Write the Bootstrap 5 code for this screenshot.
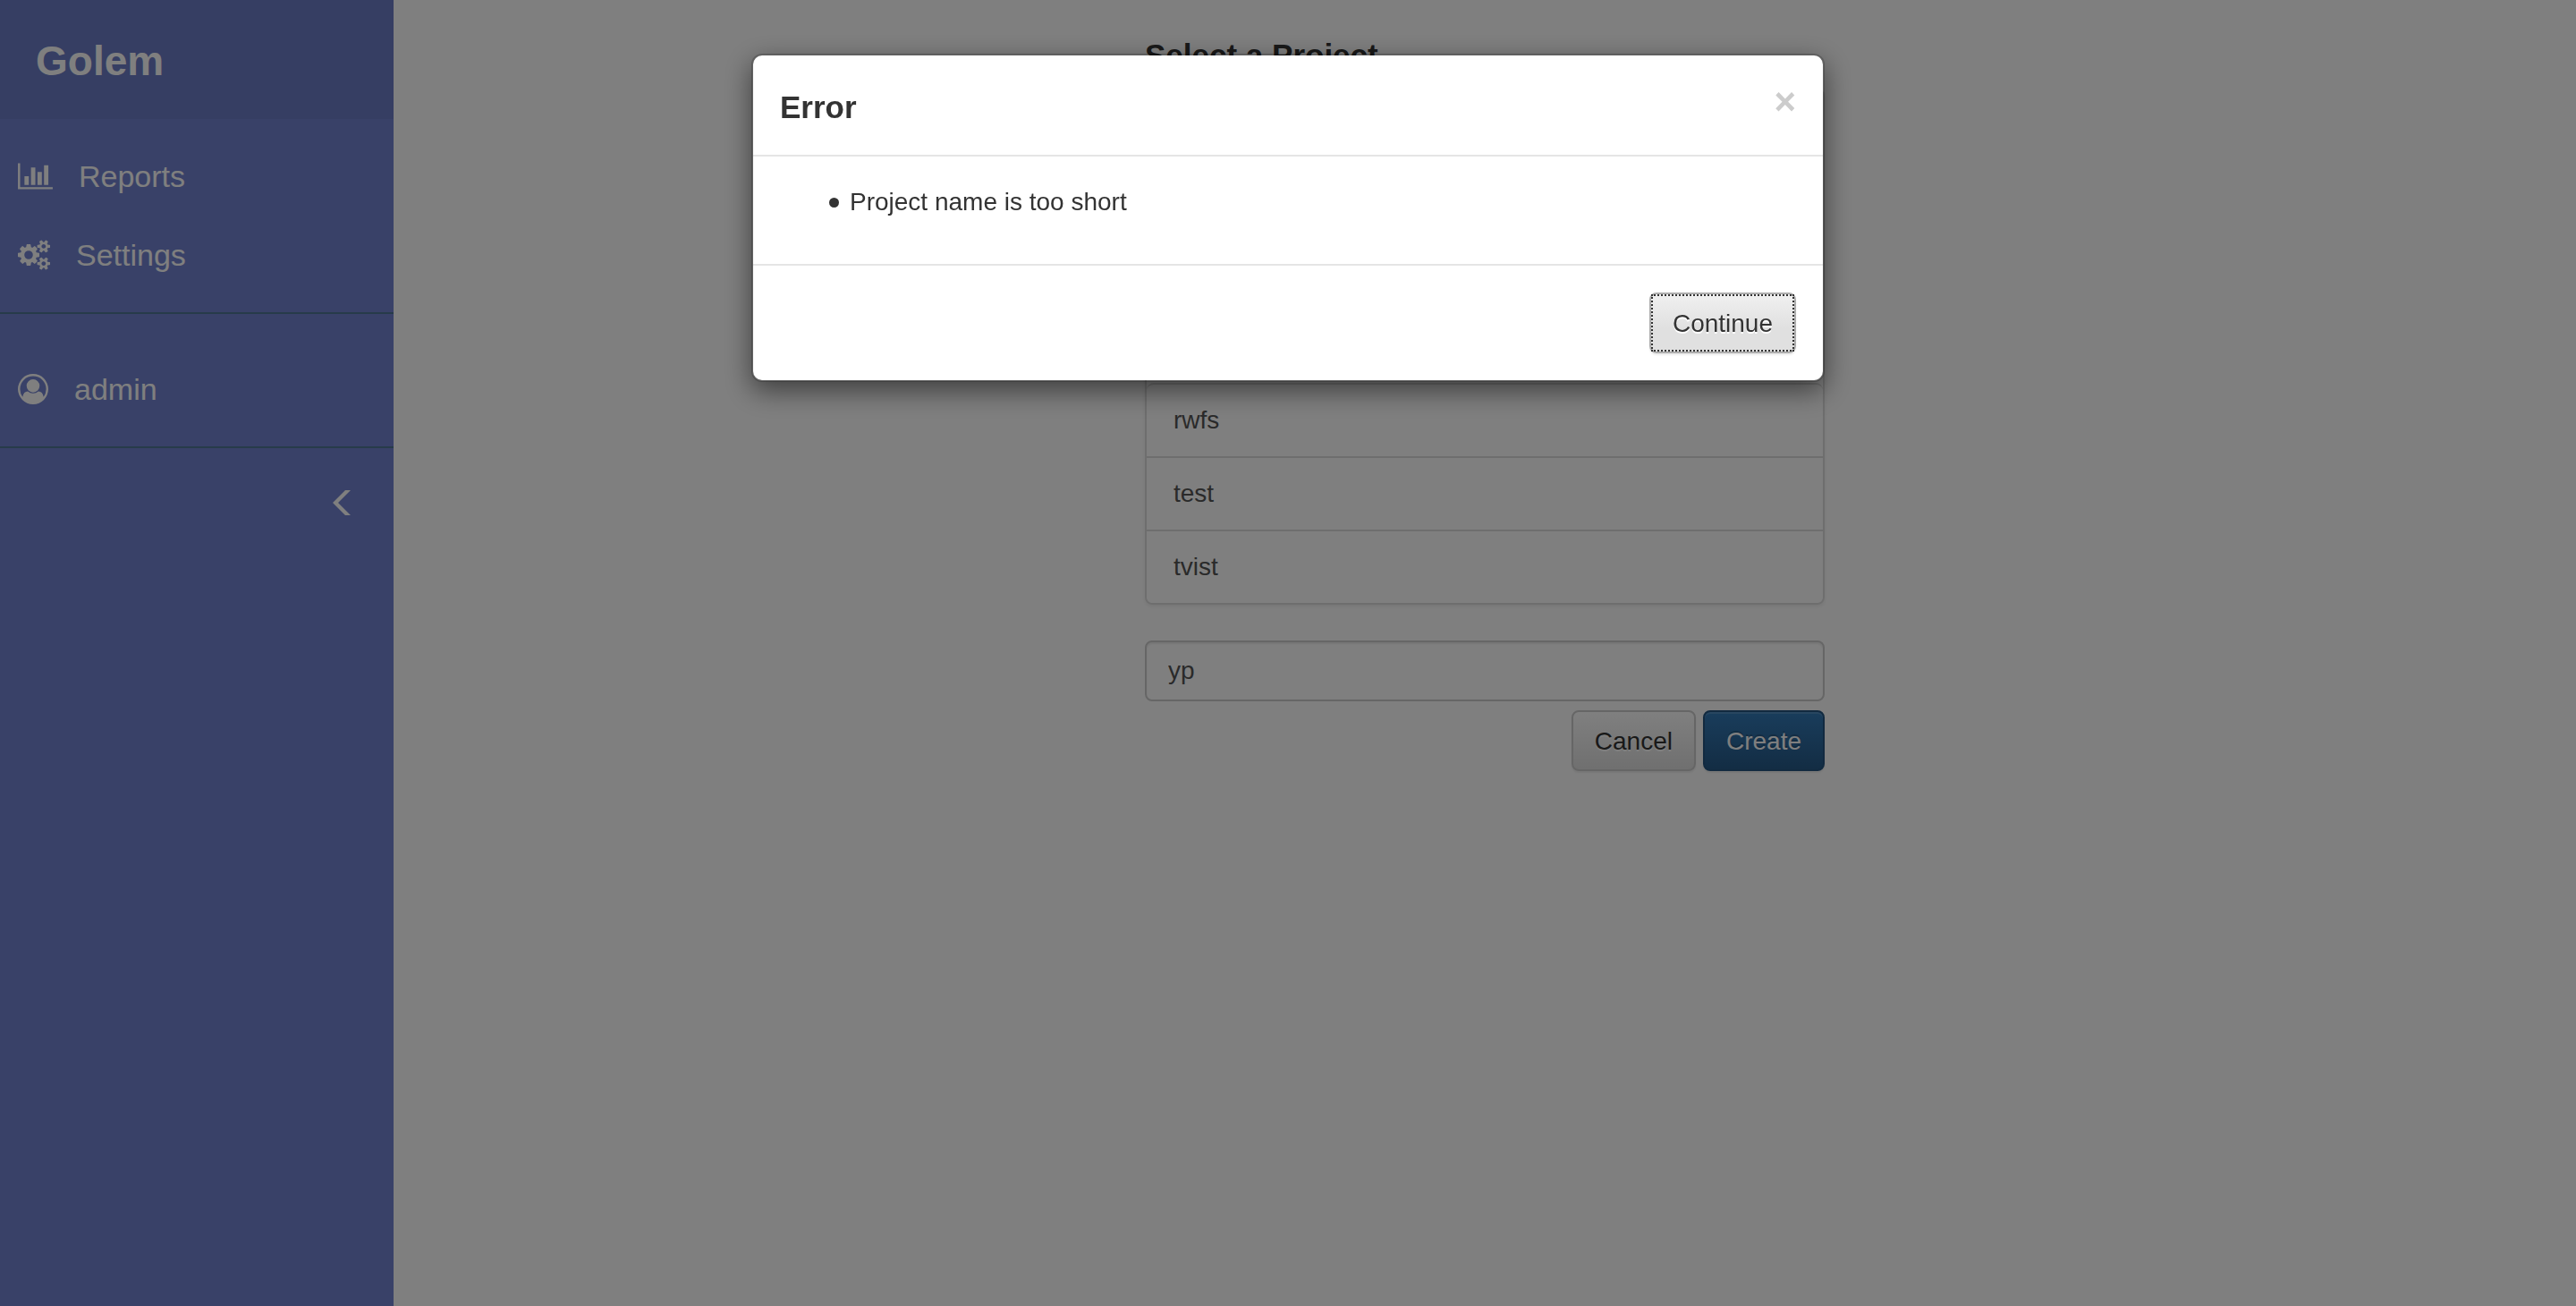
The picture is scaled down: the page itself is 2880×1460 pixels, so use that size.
<!DOCTYPE html>
<html lang="en">
<head>
<meta charset="utf-8">
<meta name="viewport" content="width=device-width, initial-scale=1">
<title>Golem</title>
<link href="https://cdn.jsdelivr.net/npm/bootstrap@5.3.0/dist/css/bootstrap.min.css" rel="stylesheet">
<style>
  body { font-family: "Liberation Sans", Arial, sans-serif; font-size: 28px; line-height: 40px; color: #333; background: #fff; }

  /* Sidebar */
  .side-panel { width: 440px; background: #7283d0; }
  .side-brand { padding: 38px 40px 35px; font-size: 46px; line-height: 60px; font-weight: 700; background: #6c7dc6; }
  .side-group { padding: 20px 0; border-bottom: 2px solid #4e7694; }
  .side-user { padding-top: 40px; }
  .side-group .nav-link { gap: 29px; padding: 20px; font-size: 34px; line-height: 48px; color: #fff; }
  .side-group svg { height: 34px; fill: #fff; }
  .side-toggle { padding: 47px 48px; line-height: 0; }
  .side-toggle svg { fill: #fff; }

  /* Project picker */
  .picker { max-width: 760px; }
  .picker-title { margin: 36px 0 12px; font-size: 35px; line-height: 51px; font-weight: 700; }
  .project-list { padding-top: 327px; border: 2px solid #ddd; border-radius: 8px; box-shadow: 0 2px 4px rgba(0,0,0,.075); }
  .project-list .list-group-item { padding: 20px 30px; border: 0; border-top: 2px solid #ddd; color: #555; }
  .project-name { height: 68px; margin: 40px 0 10px; padding: 12px 24px; font-size: 28px; line-height: 40px; color: #555; border: 2px solid #ccc; border-radius: 8px; box-shadow: inset 0 2px 2px rgba(0,0,0,.075); }

  /* Buttons */
  .btn { padding: 13px 24px 11px; font-size: 28px; line-height: 40px; border-width: 2px; border-radius: 8px; }
  .btn-plain { color: #333; border-color: #ccc; background: linear-gradient(#fff, #e0e0e0); text-shadow: 0 2px 0 #fff; box-shadow: inset 0 2px 0 rgba(255,255,255,.15), 0 2px 2px rgba(0,0,0,.075); }
  .btn-create { color: #fff; border-color: #245580; background: linear-gradient(#337ab7, #265a88); text-shadow: 0 -2px 0 rgba(0,0,0,.2); box-shadow: inset 0 2px 0 rgba(255,255,255,.15), 0 2px 2px rgba(0,0,0,.075); }
  .btn-current { position: relative; border-color: #adadad; background: linear-gradient(#f0f0f0, #e0e0e0 60%); }
  .btn-current::after { content: ""; position: absolute; inset: 0; border: 2px dotted #333; }

  /* Dialog */
  .modal-dialog { max-width: 1200px; margin: 60px auto; }
  .modal-content { border: 2px solid rgba(0,0,0,.2); border-radius: 12px; box-shadow: 0 10px 30px rgba(0,0,0,.5); background-clip: padding-box; color: #333; }
  .modal-header { padding: 32px 30px 28px; border-bottom: 2px solid #e5e5e5; }
  .modal-title { font-size: 35px; line-height: 51px; font-weight: 700; }
  .modal-body { padding: 31px 30px 29px; }
  .error-list { margin: 0 0 20px; padding-left: 55px; }
  .error-list li { display: flex; align-items: center; gap: 12px; }
  .error-list li::before { content: ""; width: 11px; height: 11px; border-radius: 50%; background: #333; }
  .modal-footer { padding: 30px; border-top: 2px solid #e5e5e5; }
  .modal-footer .btn { margin: 0; }
  .close-x { padding: 0; border: 0; background: none; font-size: 42px; line-height: 40px; font-weight: 700; color: #ccc; }
</style>
</head>
<body>
<div class="d-flex min-vh-100">
  <aside class="side-panel flex-shrink-0">
    <div class="side-brand"><a href="#" class="text-white text-decoration-none">Golem</a></div>
    <nav class="side-group nav flex-column">
      <a class="nav-link d-flex align-items-center" href="#">
        <svg width="39" viewBox="0 0 2048 1792" aria-hidden="true"><path d="M640 896v512h-256v-512h256zm384-512v1024h-256v-1024h256zm1024 1152v128h-2048v-1536h128v1408h1920zm-640-896v768h-256v-768h256zm384-384v1152h-256v-1152h256z"/></svg>
        Reports
      </a>
      <a class="nav-link d-flex align-items-center" href="#">
        <svg width="36" viewBox="0 0 1920 1792" aria-hidden="true"><path d="M896 896q0-106-75-181t-181-75-181 75-75 181 75 181 181 75 181-75 75-181zm768 512q0-52-38-90t-90-38-90 38-38 90q0 53 37.5 90.5t90.5 37.5 90.5-37.5 37.5-90.5zm0-1024q0-52-38-90t-90-38-90 38-38 90q0 53 37.5 90.5t90.5 37.5 90.5-37.5 37.5-90.5zm-384 421v185q0 10-7 19.5t-16 10.5l-155 24q-11 35-32 76 34 48 90 115 7 11 7 20 0 12-7 19-23 30-82.5 89.5t-78.5 59.5q-11 0-21-7l-115-90q-37 19-77 31-11 108-23 155-7 24-30 24h-186q-11 0-20-7.5t-10-17.5l-23-153q-34-10-75-31l-118 89q-7 7-20 7-11 0-21-8-144-133-144-160 0-9 7-19 10-14 41-53t47-61q-23-44-35-82l-152-24q-10-1-17-9.5t-7-19.5v-185q0-10 7-19.5t16-10.5l155-24q11-35 32-76-34-48-90-115-7-11-7-20 0-12 7-20 22-30 82-89t79-59q11 0 21 7l115 90q34-18 77-32 11-108 23-154 7-24 30-24h186q11 0 20 7.5t10 17.5l23 153q34 10 75 31l118-89q8-7 20-7 11 0 21 8 144 133 144 160 0 8-7 19-12 16-42 54t-45 60q23 48 34 82l152 23q10 2 17 10.5t7 19.5zm640 533v140q0 16-149 31-12 27-30 52 51 113 51 138 0 4-4 7-122 71-124 71-8 0-46-47t-52-68q-20 2-30 2t-30-2q-14 21-52 68t-46 47q-2 0-124-71-4-3-4-7 0-25 51-138-18-25-30-52-149-15-149-31v-140q0-16 149-31 13-29 30-52-51-113-51-138 0-4 4-7 4-2 35-20t59-34 30-16q8 0 46 46.5t52 67.5q20-2 30-2t30 2q51-71 92-112l6-2q4 0 124 70 4 3 4 7 0 25-51 138 17 23 30 52 149 15 149 31zm0-1024v140q0 16-149 31-12 27-30 52 51 113 51 138 0 4-4 7-122 71-124 71-8 0-46-47t-52-68q-20 2-30 2t-30-2q-14 21-52 68t-46 47q-2 0-124-71-4-3-4-7 0-25 51-138-18-25-30-52-149-15-149-31v-140q0-16 149-31 13-29 30-52-51-113-51-138 0-4 4-7 4-2 35-20t59-34 30-16q8 0 46 46.5t52 67.5q20-2 30-2t30 2q51-71 92-112l6-2q4 0 124 70 4 3 4 7 0 25-51 138 17 23 30 52 149 15 149 31z"/></svg>
        Settings
      </a>
    </nav>
    <nav class="side-group side-user nav flex-column">
      <a class="nav-link d-flex align-items-center" href="#">
        <svg width="34" viewBox="0 0 1792 1792" aria-hidden="true"><path d="M896 0q182 0 348 71t286 191 191 286 71 348q0 181-70.5 347t-190.5 286-286 191.5-349 71.5-349-71-285.5-191.5-190.5-286-71-347.5 71-348 191-286 286-191 348-71zm619 1351q149-205 149-455 0-156-61-298t-164-245-245-164-298-61-298 61-245 164-164 245-61 298q0 250 149 455 66-327 306-327 131 128 313 128t313-128q240 0 306 327zm-235-647q0-159-112.5-271.5t-271.5-112.5-271.5 112.5-112.5 271.5 112.5 271.5 271.5 112.5 271.5-112.5 112.5-271.5z"/></svg>
        admin
      </a>
    </nav>
    <div class="side-toggle text-end">
      <a href="#" aria-label="Collapse"><svg width="20" height="28" viewBox="0 0 20 28"><path d="M14 0h6L6 14l14 14h-6L0 14z"/></svg></a>
    </div>
  </aside>

  <main class="flex-grow-1">
    <div class="picker mx-auto">
      <h4 class="picker-title">Select a Project</h4>
      <div class="project-list list-group">
        <a href="#" class="list-group-item">rwfs</a>
        <a href="#" class="list-group-item">test</a>
        <a href="#" class="list-group-item">tvist</a>
      </div>
      <form>
        <input type="text" class="form-control project-name" value="yp" aria-label="Project name">
        <div class="d-flex justify-content-end gap-2">
          <button type="button" class="btn btn-plain">Cancel</button>
          <button type="button" class="btn btn-create">Create</button>
        </div>
      </form>
    </div>
  </main>
</div>

<div class="modal-backdrop show"></div>
<div class="modal d-block" role="dialog" aria-modal="true" aria-labelledby="errorTitle">
  <div class="modal-dialog">
    <div class="modal-content">
      <div class="modal-header align-items-start">
        <h4 class="modal-title" id="errorTitle">Error</h4>
        <button type="button" class="close-x" aria-label="Close">×</button>
      </div>
      <div class="modal-body">
        <ul class="error-list"><li>Project name is too short</li></ul>
      </div>
      <div class="modal-footer">
        <button type="button" class="btn btn-plain btn-current">Continue</button>
      </div>
    </div>
  </div>
</div>
<script src="https://cdn.jsdelivr.net/npm/bootstrap@5.3.0/dist/js/bootstrap.bundle.min.js"></script>
</body>
</html>
